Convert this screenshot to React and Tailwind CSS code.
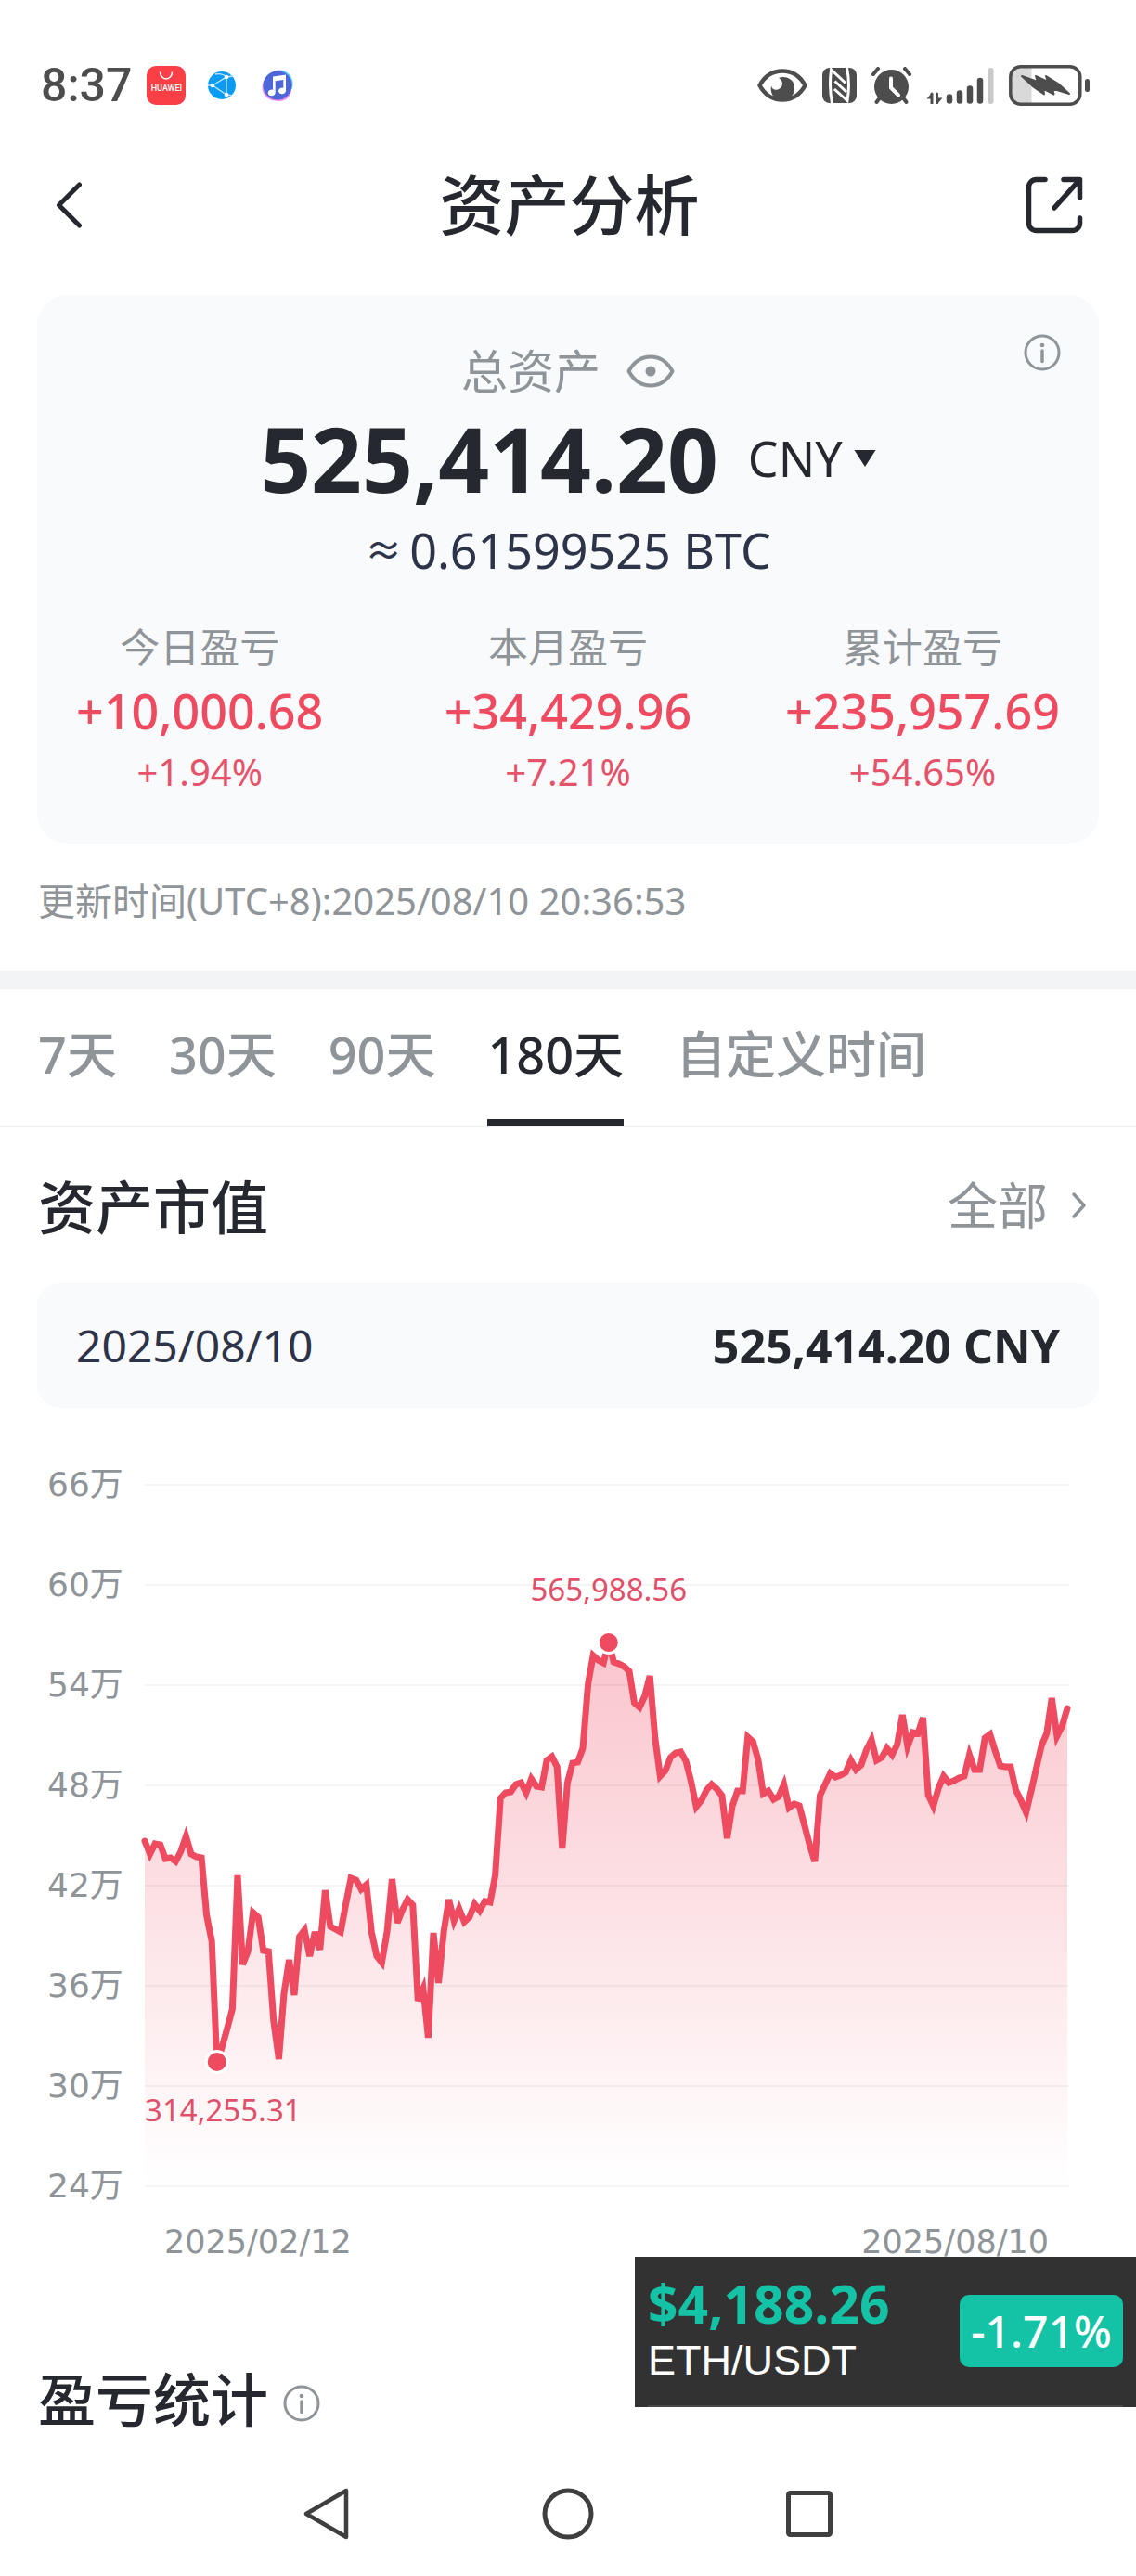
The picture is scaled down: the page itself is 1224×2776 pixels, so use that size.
import { useState } from 'react';

const STATS = [
  { label: '今日盈亏', value: '+10,000.68', rate: '+1.94%', align: 'justify-self-start' },
  { label: '本月盈亏', value: '+34,429.96', rate: '+7.21%', align: 'justify-self-center' },
  { label: '累计盈亏', value: '+235,957.69', rate: '+54.65%', align: 'justify-self-end' },
];

const RANGES = ['7天', '30天', '90天', '180天', '自定义时间'];

const Y_LABELS = ['66万', '60万', '54万', '48万', '42万', '36万', '30万', '24万'];

// one entry per day, measured down from the 66万 line (756 units = 42万)
const TREND = [
  384, 398, 387, 388, 403, 402, 406, 395, 379, 398, 401, 402, 464, 492, 622,
  606, 586, 565, 421, 517, 503, 461, 466, 502, 503, 578, 619, 549, 512, 550,
  487, 480, 508, 482, 501, 437, 476, 479, 482, 452, 424, 426, 436, 431, 482,
  508, 515, 482, 425, 472, 458, 447, 453, 556, 543, 596, 483, 537, 482, 447,
  470, 457, 471, 466, 452, 459, 449, 450, 421, 338, 332, 331, 323, 321, 332,
  317, 325, 326, 297, 293, 304, 392, 321, 300, 299, 284, 215, 184, 189, 192,
  170, 191, 193, 196, 201, 235, 240, 228, 206, 273, 314, 308, 294, 289, 288,
  298, 320, 347, 340, 329, 323, 328, 335, 381, 346, 330, 330, 272, 277, 296,
  333, 330, 339, 336, 323, 348, 344, 346, 367, 388, 406, 335, 323, 311, 315,
  313, 310, 297, 307, 302, 286, 275, 297, 294, 284, 291, 280, 248, 282, 267,
  268, 251, 334, 346, 327, 314, 321, 319, 316, 314, 291, 307, 307, 273, 269,
  287, 303, 304, 304, 329, 340, 353, 330, 305, 281, 268, 230, 271, 260, 241,
];

const W = 996;
const H = 756;
const px = i => (i * (W - 2)) / (TREND.length - 1);
const LINE = TREND.map((y, i) => `${px(i).toFixed(1)},${y}`).join(' ');

function InfoIcon() {
  return (
    <svg className="size-10" viewBox="0 0 40 40" fill="none" stroke="#8f9498" strokeWidth="3">
      <circle cx="20" cy="20" r="18" />
      <path d="M20 18v11.500" strokeLinecap="round" strokeWidth="3.500" />
      <circle cx="20" cy="12" r="2.300" fill="#8f9498" stroke="none" />
    </svg>
  );
}

function StatusBar() {
  return (
    <div className="flex items-center pt-16 pl-[44px] pr-[50px]">
      <span className="font-['Roboto',sans-serif] text-[50px] leading-14 font-medium text-[#4d4d4d]">8:37</span>
      <div className="ml-4 flex h-[42px] w-[42px] flex-col items-center rounded-[10px] bg-[#fb3f47] text-white">
        <svg className="mt-1.5 h-2.5 w-4" viewBox="0 0 16 10" fill="none" stroke="#fff" strokeWidth="1.500">
          <path d="M1.500 0.500a6.500 7.500 0 0 0 13 0" />
        </svg>
        <span className="mt-0.5 font-['Roboto',sans-serif] text-[9px] leading-3 font-medium">HUAWEI</span>
      </div>
      <svg className="ml-6 h-[36px] w-[30px]" viewBox="0 0 30 36">
        <circle cx="15" cy="18" r="15" fill="#0a9bf5" />
        <g fill="none" stroke="#bfe8ff" strokeWidth="1.300">
          <path d="M5 18 20 9v19zM20 9l7-1M20 28l6 1M5 18H0" />
          <path d="M8 6c5-1 9 0 12 3" />
        </g>
        <g fill="#fff">
          <circle cx="5" cy="18" r="2.300" />
          <circle cx="20" cy="9" r="2.300" />
          <circle cx="20" cy="28" r="2.300" />
        </g>
      </svg>
      <svg className="ml-7 size-[34px]" viewBox="0 0 34 34">
        <circle cx="19" cy="15" r="14.500" fill="#4fc4f8" />
        <circle cx="15" cy="19" r="14.500" fill="#e98df2" />
        <circle cx="19" cy="21" r="13" fill="#f08af0" />
        <circle cx="17" cy="17" r="15.500" fill="#4d66d8" />
        <path d="M12 7.500 26 5.500v17.300a4 3.300 0 1 1-2.700-3V11l-8.600 1.200v12.600a4 3.300 0 1 1-2.700-3z" fill="#fff" />
      </svg>

      <div className="ml-auto flex items-center gap-4">
        <svg className="h-9 w-[54px]" viewBox="0 0 54 36">
          <path d="M2.500 18C8 8 17 2.500 27 2.500S46 8 51.500 18C46 28 37 33.500 27 33.500S8 28 2.500 18Z" fill="none" stroke="#4d4d4d" strokeWidth="4.500" strokeLinejoin="round" />
          <path d="M23 10c7-3 17 1 17 10.500 0 6-3 10-6 12H20c-4-3-6-8-5-14 1 4 4 5 7 4 6-2 7-9 1-12.500Z" fill="#4d4d4d" />
        </svg>
        <svg className="h-[38px] w-[37px]" viewBox="0 0 37 38">
          <rect width="37" height="38" rx="8" fill="#4d4d4d" />
          <path d="M10.500 38C8 26 8 14 9.500 2L25 16.500M26.500 0c2.500 12 2.500 24 .5 35.500L13 23M13.500 14.500 26 26" fill="none" stroke="#fff" strokeWidth="3" />
        </svg>
        <svg className="h-10 w-[43px]" viewBox="0 0 43 40">
          <circle cx="21.500" cy="21.500" r="18.500" fill="#4d4d4d" />
          <g fill="none" stroke="#4d4d4d" strokeWidth="4" strokeLinecap="round">
            <path d="M2 8l5-6M41 8l-5-6M8.500 34l-3 4M34.500 34l3 4" />
          </g>
          <path d="M21 12.500v10l8 8" fill="none" stroke="#fff" strokeWidth="4" strokeLinecap="round" strokeLinejoin="round" />
        </svg>
        <svg className="h-10 w-[73px]" viewBox="0 0 73 40" stroke="#4d4d4d" strokeLinecap="round">
          <path d="M6 29v10M11.500 29v10" strokeWidth="3" />
          <path d="M0.500 34.500 6 28v6.500zM17.500 33.500 12 40v-6.500z" fill="#4d4d4d" stroke="none" />
          <path d="M25 32.500v4M36 28.500v8M47 23.500v13M58 15v21.500" strokeWidth="6.500" />
          <path d="M69.500 4v33" strokeWidth="6" stroke="#c9c9c9" />
        </svg>
        <svg className="h-11 w-[87px]" viewBox="0 0 87 44">
          <path d="M13 3h11.500v38H13C7 41 3 37 3 31V13C3 7 7 3 13 3Z" fill="#d9d9d9" />
          <rect x="1.800" y="1.800" width="75" height="40.400" rx="11" fill="none" stroke="#4d4d4d" strokeWidth="3.500" />
          <path d="M14 12 31 18 29 12 42 18 40 12 53 20 65 31 47 25.500 48.500 31.500 37 25.500 38 31.500 27 24z" fill="#4d4d4d" stroke="#4d4d4d" strokeWidth="2" strokeLinejoin="round" />
          <rect x="82" y="15" width="5" height="14" rx="2.500" fill="#4d4d4d" />
        </svg>
      </div>
    </div>
  );
}

function Header() {
  return (
    <header className="grid h-[198px] grid-cols-[1fr_auto_1fr] items-center pt-1 pr-[57px] pl-[60px]">
      <button aria-label="返回" className="justify-self-start">
        <svg className="h-[50px] w-7" viewBox="0 0 28 50" fill="none" stroke="#25282f" strokeWidth="5" strokeLinecap="round" strokeLinejoin="round">
          <path d="M25.500 3 3.500 25l22 22" />
        </svg>
      </button>
      <h1 className="text-[70px] leading-20 font-medium">资产分析</h1>
      <button aria-label="分享" className="justify-self-end">
        <svg className="size-[62px]" viewBox="0 0 62 62" fill="none" stroke="#25282f" strokeWidth="5.500" strokeLinecap="round" strokeLinejoin="round">
          <path d="M21 3.500h-9.500a8 8 0 0 0-8 8v39a8 8 0 0 0 8 8h39a8 8 0 0 0 8-8V45M41 3.500h17.500V23M58 4 31 34" />
        </svg>
      </button>
    </header>
  );
}

function Summary() {
  return (
    <section className="relative mx-10 rounded-[32px] bg-[#f8fafc] px-[42px] pt-[52px] pb-[49px]">
      <button aria-label="说明" className="absolute top-[42px] right-[41px]"><InfoIcon /></button>

      <div className="flex h-[60px] items-center justify-center gap-7 text-[#8f9498]">
        <span className="text-[50px] leading-[60px]">总资产</span>
        <button aria-label="隐藏金额">
          <svg className="h-9 w-[52px]" viewBox="0 0 52 36">
            <path d="M2.500 18C8 8 16 2.500 26 2.500S44 8 49.500 18C44 28 36 33.500 26 33.500S8 28 2.500 18Z" fill="none" stroke="#8f9498" strokeWidth="4" strokeLinejoin="round" />
            <circle cx="26" cy="18" r="5.500" fill="#8f9498" />
          </svg>
        </button>
      </div>

      <div className="flex h-32 items-center justify-center">
        <span className="text-[96px] leading-32 font-bold">525,414.20</span>
        <select aria-label="货币" defaultValue="CNY" className="ml-8 appearance-none bg-transparent text-[52px] leading-[70px]">
          <option>CNY</option>
        </select>
        <svg className="pointer-events-none ml-3 h-5 w-6" viewBox="0 0 24 20"><path d="M0.500 1h23L12 19z" fill="#25282f" /></svg>
      </div>

      <p className="flex items-center justify-center gap-2 text-[52px] leading-[70px] text-[#2d3348]">
        <span className="text-[40px] font-medium">≈</span>
        <span>0.61599525 BTC</span>
      </p>

      <div className="mt-10 grid grid-cols-3">
        {STATS.map(s => (
          <div key={s.label} className={`text-center ${s.align}`}>
            <p className="text-[43px] leading-[60px] text-[#8f9498]">{s.label}</p>
            <p className="text-[52px] leading-[76px] font-medium text-[#ee4b60]">{s.value}</p>
            <p className="text-[40px] leading-14 text-[#e5536a]">{s.rate}</p>
          </div>
        ))}
      </div>
    </section>
  );
}

function RangeTabs() {
  const [active, setActive] = useState('180天');

  return (
    <nav className="flex gap-14 border-b-2 border-[#eff0f2] px-[41px]">
      {RANGES.map(r => (
        <button
          key={r}
          onClick={() => setActive(r)}
          className={`h-[147px] border-b-[7px] text-[54px] font-medium ${r === active ? 'border-[#25282f] text-[#25282f]' : 'border-transparent text-[#8f9498]'}`}
        >
          {r}
        </button>
      ))}
    </nav>
  );
}

function TrendChart() {
  return (
    <div className="mt-[83px] pr-[72px] pl-[51px]">
      <div className="flex font-['DejaVu_Sans','Noto_Sans_CJK_SC',sans-serif] text-[36px] text-[#8f9498]">
        <div className="flex w-[105px] flex-col justify-between">
          {Y_LABELS.map(l => <span key={l} className="flex h-0 items-center">{l}</span>)}
        </div>
        <svg className="h-auto w-full min-w-0 flex-1 overflow-visible" viewBox={`0 0 ${W} ${H}`}>
          <defs>
            <linearGradient id="trendFill" x1="0" y1="0" x2="0" y2="1">
              <stop offset="0" stopColor="#ee4b60" stopOpacity="0.32" />
              <stop offset="1" stopColor="#ee4b60" stopOpacity="0" />
            </linearGradient>
          </defs>
          <polygon points={`0,${H} ${LINE} ${W - 2},${H}`} fill="url(#trendFill)" />
          {Y_LABELS.map((l, i) => (
            <line key={l} x1="0" x2={W} y1={i * 108} y2={i * 108} stroke="#000" strokeOpacity="0.04" strokeWidth="2" />
          ))}
          <polyline points={LINE} fill="none" stroke="#ee4b60" strokeWidth="7" strokeLinecap="round" />
          <g fill="#ee4b60" stroke="#fff" strokeWidth="3">
            <circle cx={px(90)} cy="170" r="11.500" />
            <circle cx={px(14)} cy="622" r="11.500" />
          </g>
          <g fill="#e0506a" className="font-['Noto_Sans',sans-serif] text-[33px]">
            <text x={px(90)} y="125" textAnchor="middle">565,988.56</text>
            <text x="0" y="686">314,255.31</text>
          </g>
        </svg>
      </div>
      <div className="flex justify-between pt-[30px] pr-[22px] pl-[126px] font-['DejaVu_Sans',sans-serif] text-[35px] leading-[60px] text-[#8f9498]">
        <span>2025/02/12</span>
        <span>2025/08/10</span>
      </div>
    </div>
  );
}

function PriceTicker() {
  return (
    <aside className="absolute right-0 bottom-[182px] w-[540px] bg-[#323232] px-3.5">
      <div className="flex h-[162px] items-center justify-between border-b-2 border-[#484848]">
        <div>
          <p className="text-[57px] leading-16 font-bold text-[#14c3a5]">$4,188.26</p>
          <p className="font-['Liberation_Sans',sans-serif] text-[45px] leading-[60px] text-white">ETH/USDT</p>
        </div>
        <span className="w-44 rounded-[10px] bg-[#14c3a5] text-center text-[48px] leading-[78px] font-medium text-white">-1.71%</span>
      </div>
    </aside>
  );
}

function SystemNav() {
  return (
    <div className="flex h-[150px] items-center justify-center gap-[204px] pt-4">
      <button aria-label="后退">
        <svg className="size-14" viewBox="0 0 56 56" fill="none" stroke="#3f3f3f" strokeWidth="4.500" strokeLinejoin="round">
          <path d="M49 3v50L6 28z" />
        </svg>
      </button>
      <button aria-label="主页">
        <svg className="size-14" viewBox="0 0 56 56" fill="none" stroke="#3f3f3f" strokeWidth="5">
          <circle cx="28" cy="28" r="25" />
        </svg>
      </button>
      <button aria-label="最近任务">
        <svg className="size-14" viewBox="0 0 56 56" fill="none" stroke="#3f3f3f" strokeWidth="5">
          <rect x="5.500" y="5.500" width="45" height="45" rx="2" />
        </svg>
      </button>
    </div>
  );
}

export default function App() {
  return (
    <div className="relative min-h-screen bg-white font-['Noto_Sans','Noto_Sans_CJK_SC',sans-serif] text-[#25282f]">
      <StatusBar />
      <Header />
      <Summary />
      <p className="mx-[41px] mt-8 mb-[45px] text-[40px] leading-[60px] text-[#8f9498]">
        更新时间(UTC+8):2025/08/10 20:36:53
      </p>
      <div className="h-5 bg-[#f3f4f6]" />
      <RangeTabs />

      <section>
        <div className="flex h-[168px] items-center justify-between pr-[51px] pl-[41px]">
          <h2 className="pt-1 text-[62px] leading-20 font-medium">资产市值</h2>
          <a href="#all" className="flex items-center gap-6 text-[54px] leading-20 text-[#8f9498]">
            全部
            <svg className="h-8 w-5" viewBox="0 0 20 32" fill="none" stroke="#8f9498" strokeWidth="3.500" strokeLinecap="round" strokeLinejoin="round">
              <path d="M4 4l11 12L4 28" />
            </svg>
          </a>
        </div>
        <div className="mx-10 flex h-[134px] items-center justify-between rounded-[24px] bg-[#f8fafc] px-[42px] text-[48px]">
          <span className="text-[#2d3348]">2025/08/10</span>
          <span className="text-[50px] font-bold">525,414.20 CNY</span>
        </div>
        <TrendChart />
      </section>

      <div className="flex items-center gap-4 pt-[100px] pl-[41px]">
        <h2 className="text-[62px] leading-20 font-medium">盈亏统计</h2>
        <button aria-label="说明" className="pt-2"><InfoIcon /></button>
      </div>
      <SystemNav />
      <PriceTicker />
    </div>
  );
}
